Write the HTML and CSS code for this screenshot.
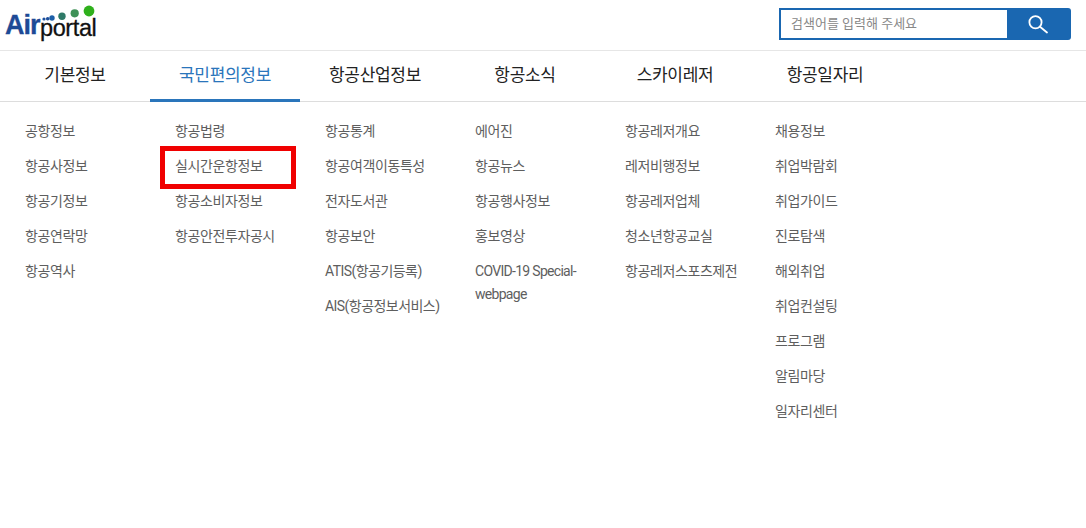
FILE: index.html
```html
<!DOCTYPE html>
<html lang="ko">
<head>
<meta charset="utf-8">
<title>Airportal</title>
<link rel="stylesheet" href="styles.css">
</head>
<body>
<header class="top">
  <a class="logo">
    <span class="logo-air">Air</span><span class="logo-portal">portal</span>
    <svg class="logo-dots" width="92" height="24" viewBox="0 0 92 24">
      <circle cx="39" cy="15" r="1.6" fill="#1d4f9c"/>
      <circle cx="42.7" cy="14.8" r="1.8" fill="#1d4f9c"/>
      <circle cx="47" cy="14" r="2.7" fill="#1d5fa8"/>
      <circle cx="57" cy="12.2" r="3.7" fill="#2f7a68"/>
      <circle cx="69.7" cy="9.3" r="4.1" fill="#3f9157"/>
      <circle cx="84" cy="7" r="5.4" fill="#2fb01c"/>
    </svg>
  </a>
  <form class="search">
    <div class="search-field">검색어를 입력해 주세요</div>
    <div class="search-btn">
      <svg width="22" height="22" viewBox="0 0 22 22" fill="none" stroke="#fff" stroke-width="1.8" stroke-linecap="round">
        <circle cx="7.5" cy="9.3" r="6.1"/>
        <path d="M12 13.8 L19 19.5"/>
      </svg>
    </div>
  </form>
</header>
<nav class="gnb">
  <a class="gnb-item">기본정보</a>
  <a class="gnb-item active">국민편의정보</a>
  <a class="gnb-item">항공산업정보</a>
  <a class="gnb-item">항공소식</a>
  <a class="gnb-item">스카이레저</a>
  <a class="gnb-item">항공일자리</a>
</nav>
<section class="sub">
  <ul class="col">
    <li>공항정보</li><li>항공사정보</li><li>항공기정보</li><li>항공연락망</li><li>항공역사</li>
  </ul>
  <ul class="col">
    <li>항공법령</li><li class="marked">실시간운항정보</li><li>항공소비자정보</li><li>항공안전투자공시</li>
  </ul>
  <ul class="col">
    <li>항공통계</li><li>항공여객이동특성</li><li>전자도서관</li><li>항공보안</li><li class="mixed">ATIS(항공기등록)</li><li class="mixed">AIS(항공정보서비스)</li>
  </ul>
  <ul class="col">
    <li>에어진</li><li>항공뉴스</li><li>항공행사정보</li><li>홍보영상</li><li class="latin">COVID-19 Special-webpage</li>
  </ul>
  <ul class="col">
    <li>항공레저개요</li><li>레저비행정보</li><li>항공레저업체</li><li>청소년항공교실</li><li>항공레저스포츠제전</li>
  </ul>
  <ul class="col">
    <li>채용정보</li><li>취업박람회</li><li>취업가이드</li><li>진로탐색</li><li>해외취업</li><li>취업컨설팅</li><li>프로그램</li><li>알림마당</li><li>일자리센터</li>
  </ul>
</section>
</body>
</html>
```
FILE: styles.css
```css
*, *::after { box-sizing: border-box; }
html, body { margin: 0; padding: 0; }
body {
  width: 1086px;
  height: 528px;
  overflow: hidden;
  background: #fff;
  font-family: Roboto, "Noto Sans CJK KR", sans-serif;
  color: #555;
}
.top {
  height: 51px;
  border-bottom: 1px solid #e6e6e6;
  display: flex;
  justify-content: space-between;
  padding: 8px 15px 0 5px;
}
.logo {
  position: relative;
  display: block;
  width: 92px;
  height: 36px;
  white-space: nowrap;
}
.logo-air {
  position: absolute;
  left: 0;
  top: 1px;
  font-family: "Liberation Sans", sans-serif;
  font-weight: 700;
  font-size: 27px;
  line-height: 32px;
  letter-spacing: -1px;
  color: #1d4a96;
  -webkit-text-stroke: 0.3px #1d4a96;
}
.logo-portal {
  position: absolute;
  left: 35px;
  top: 8px;
  font-family: "Liberation Sans", sans-serif;
  font-size: 23.5px;
  line-height: 24px;
  letter-spacing: -0.4px;
  color: #111;
  -webkit-text-stroke: 0.3px #111;
}
.logo-dots { position: absolute; left: 0; top: -4px; }
.search {
  display: flex;
  width: 292px;
  height: 32px;
}
.search-field {
  width: 228px;
  height: 32px;
  border: 2px solid #1a67b1;
  border-right: 0;
  padding-left: 10px;
  font-size: 13px;
  line-height: 27px;
  color: #888;
}
.search-btn {
  flex: 1;
  background: #1a67b1;
  border-radius: 0 3px 3px 0;
  display: flex;
  align-items: center;
  justify-content: center;
}
.gnb {
  display: flex;
  height: 51px;
  border-bottom: 1px solid #ddd;
}
.gnb-item {
  width: 150px;
  height: 51px;
  text-align: center;
  font-size: 17px;
  line-height: 49px;
  letter-spacing: -0.3px;
  color: #222;
}
.gnb-item.active {
  color: #2a75bb;
  border-bottom: 3px solid #2a75bb;
}
.sub {
  display: flex;
  padding-top: 13px;
}
.col {
  width: 150px;
  margin: 0;
  padding: 0 8px 0 25px;
  list-style: none;
}
.col li {
  position: relative;
  padding: 5px 0 8px;
  font-size: 14px;
  line-height: 22px;
  letter-spacing: -0.4px;
  color: #5e5e5e;
}
.col li.mixed { letter-spacing: -0.55px; }
.col li.latin { letter-spacing: -0.7px; line-height: 23px; }
.marked::after {
  content: "";
  position: absolute;
  left: -15px;
  top: -4px;
  width: 136px;
  height: 43px;
  border: 5px solid #f00000;
}
```
